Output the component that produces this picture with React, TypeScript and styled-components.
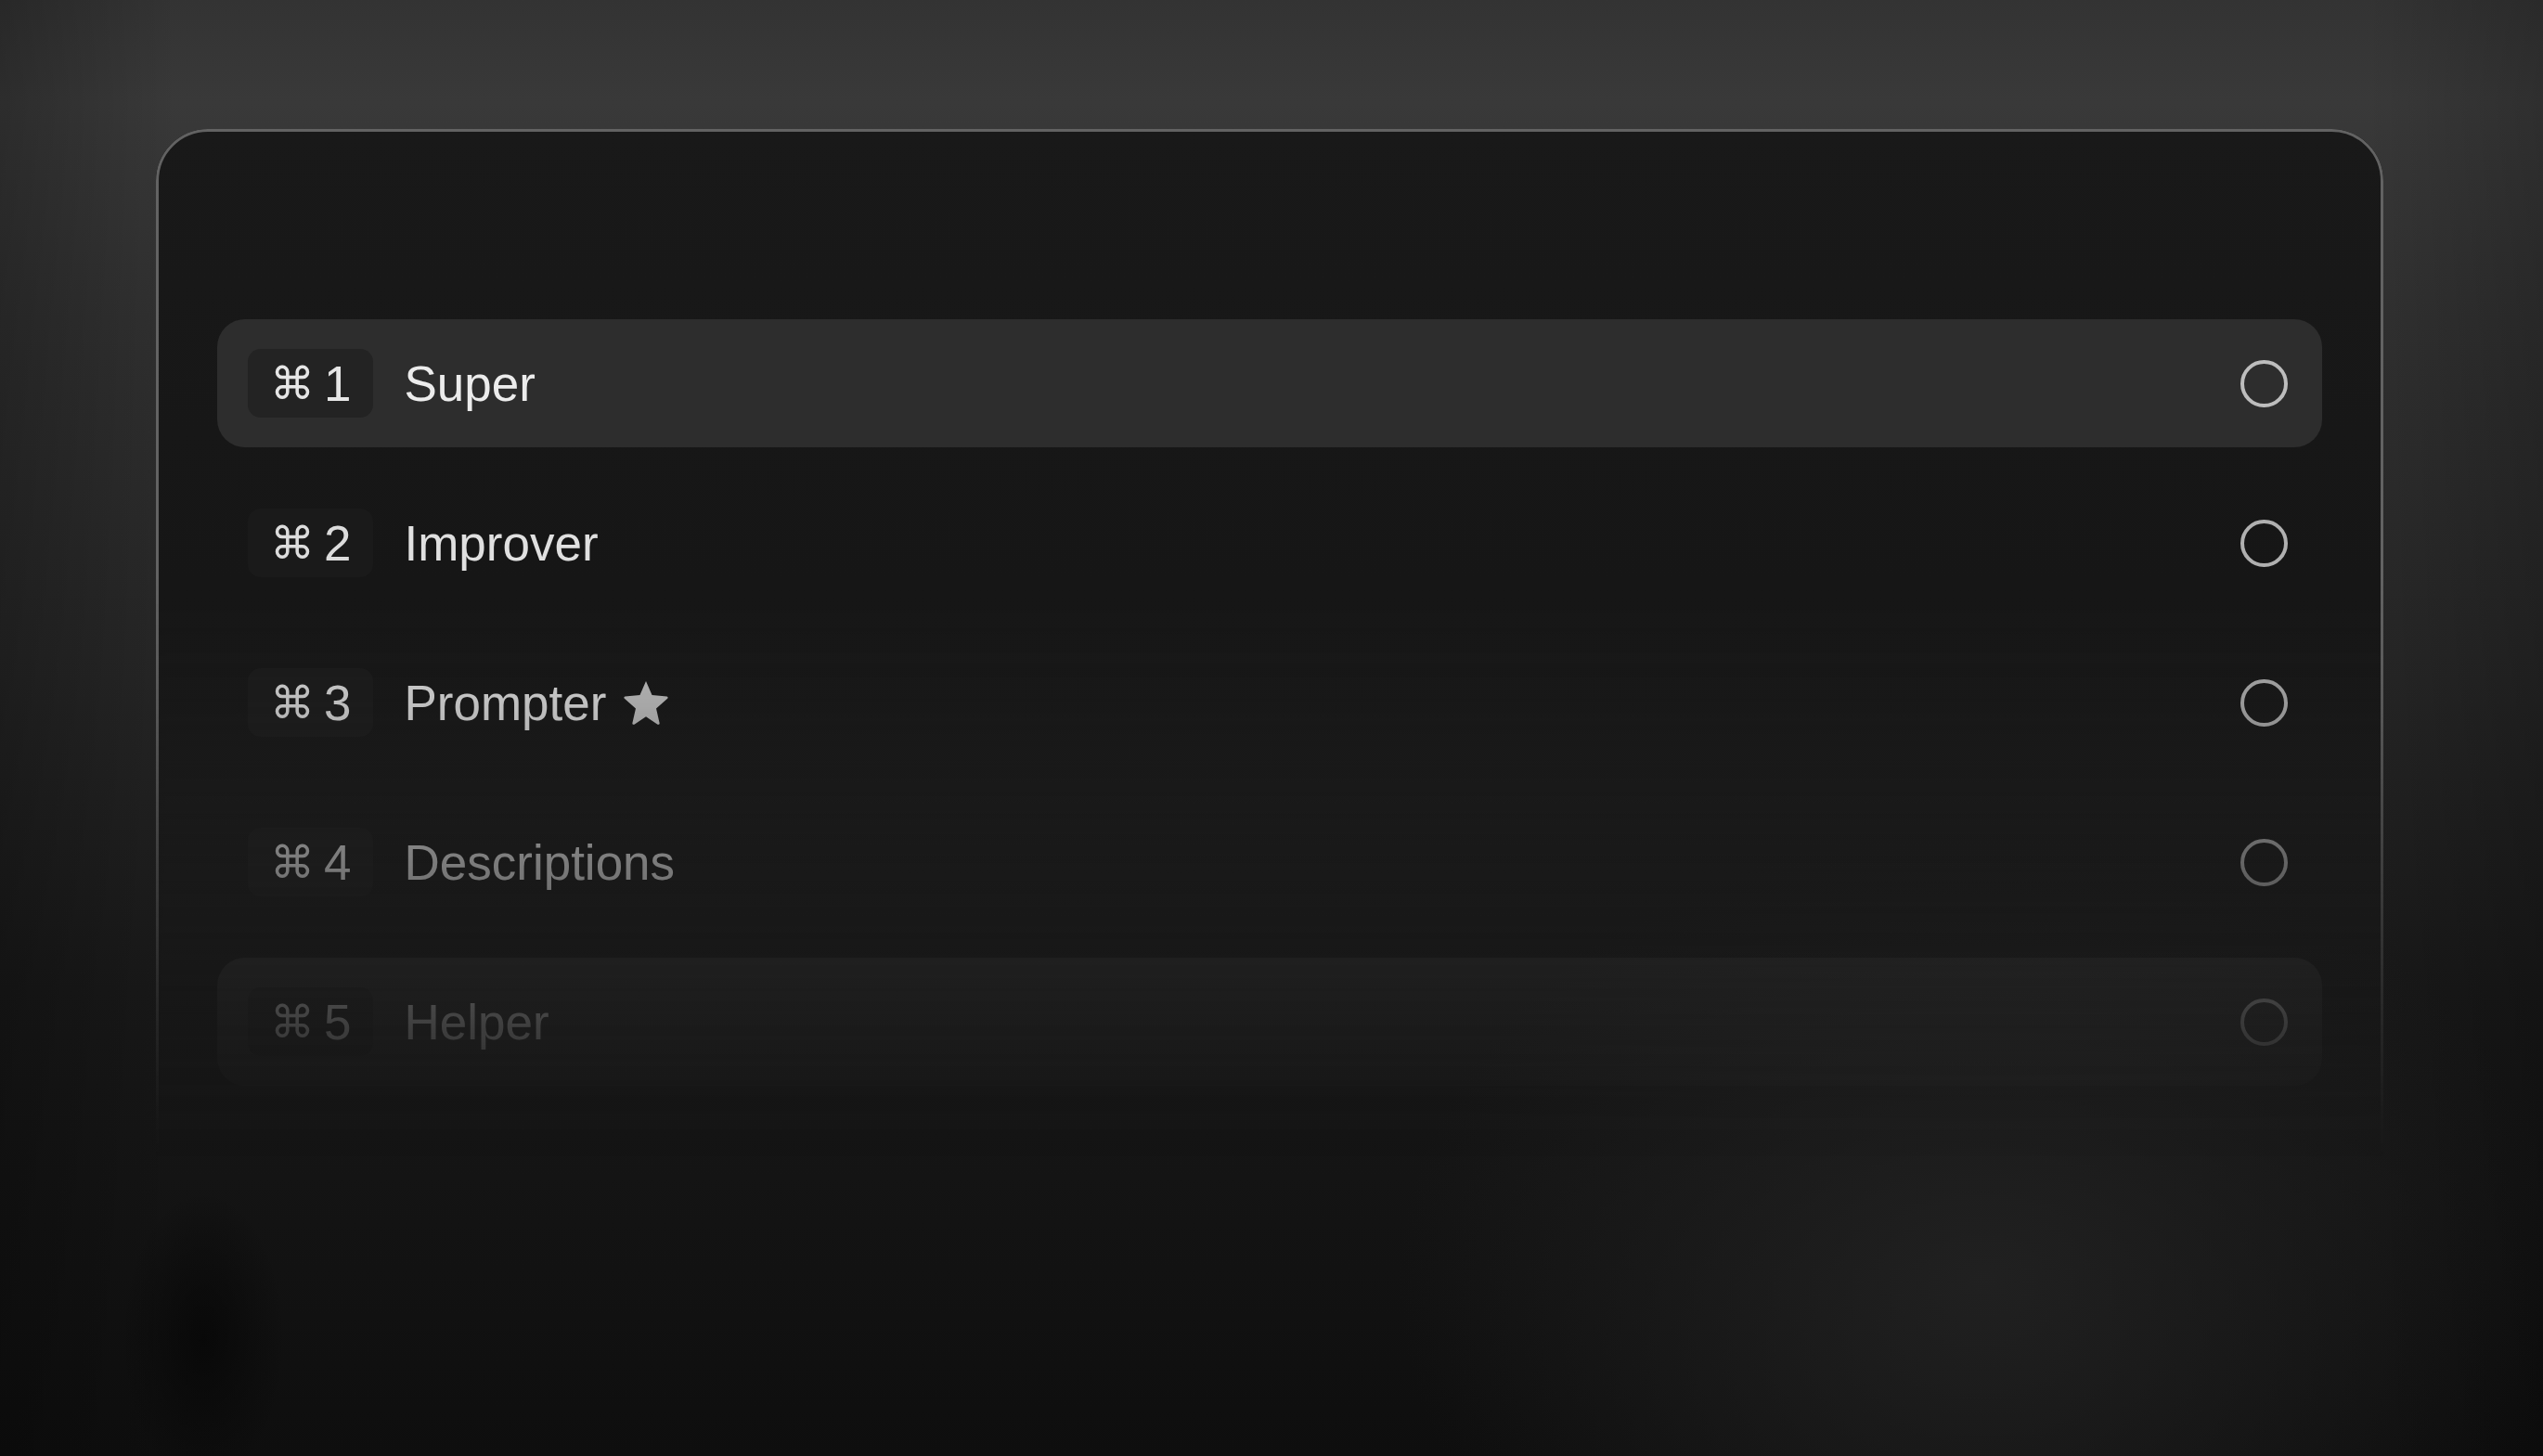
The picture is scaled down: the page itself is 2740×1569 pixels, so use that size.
import React from "react";
import styled, { createGlobalStyle } from "styled-components";

const Global = createGlobalStyle`
  html, body {
    margin: 0;
    padding: 0;
    width: 2740px;
    height: 1569px;
    overflow: hidden;
  }
  body {
    font-family: "Liberation Sans", Arial, sans-serif;
    background:
      radial-gradient(ellipse 900px 700px at 78% 88%, rgba(34,34,34,0.9), rgba(34,34,34,0) 70%),
      radial-gradient(ellipse 110px 200px at 8% 92%, rgba(6,6,6,0.75), rgba(6,6,6,0) 80%),
      linear-gradient(to right, rgba(0,0,0,0.22) 0%, rgba(0,0,0,0) 7%, rgba(0,0,0,0) 93%, rgba(0,0,0,0.18) 100%),
      linear-gradient(to bottom, #333333 0%, #393939 7%, #303030 22%, #262626 45%, #181818 68%, #0e0e0e 100%);
  }
`;

const Page = styled.div`
  width: 2740px;
  height: 1569px;
  box-sizing: border-box;
  padding: 139px 0 0 168px;
  display: flex;
  align-items: flex-start;
`;

const Window = styled.div`
  width: 2400px;
  height: 1220px;
  box-sizing: border-box;
  border: 3px solid #626262;
  border-radius: 56px;
  background: linear-gradient(to bottom, #191919 0%, #161616 40%, #141414 100%);
  box-shadow: 0 0 0 2px #0c0c0c, 0 30px 90px rgba(0, 0, 0, 0.35);
  padding: 202px 63px 0 63px;
  display: flex;
  flex-direction: column;
  gap: 34px;
  -webkit-mask-image: linear-gradient(
    to bottom,
    #000 0px,
    #000 480px,
    rgba(0, 0, 0, 0.84) 616px,
    rgba(0, 0, 0, 0.49) 788px,
    rgba(0, 0, 0, 0.2) 960px,
    rgba(0, 0, 0, 0.03) 1070px,
    rgba(0, 0, 0, 0) 1110px
  );
  mask-image: linear-gradient(
    to bottom,
    #000 0px,
    #000 480px,
    rgba(0, 0, 0, 0.84) 616px,
    rgba(0, 0, 0, 0.49) 788px,
    rgba(0, 0, 0, 0.2) 960px,
    rgba(0, 0, 0, 0.03) 1070px,
    rgba(0, 0, 0, 0) 1110px
  );
`;

const Row = styled.div<{ $active?: boolean }>`
  height: 138px;
  flex: 0 0 auto;
  border-radius: 30px;
  background: ${(p) => (p.$active ? "#2d2d2d" : "transparent")};
  display: flex;
  align-items: center;
  padding: 0 37px 0 33px;
`;

const Badge = styled.div<{ $active?: boolean }>`
  height: 74px;
  border-radius: 14px;
  background: ${(p) => (p.$active ? "#232323" : "#1a1a1a")};
  display: flex;
  align-items: center;
  padding: 0 24px 0 24px;
  color: ${(p) => (p.$active ? "#e6e6e6" : "#dcdcdc")};
  font-size: 53px;
  line-height: 1;
`;

const Cmd = styled.span`
  font-family: "DejaVu Sans", sans-serif;
  font-size: 48px;
  margin-right: 10px;
`;

const Label = styled.span<{ $active?: boolean }>`
  margin-left: 33px;
  font-size: 53px;
  line-height: 1;
  color: ${(p) => (p.$active ? "#ececec" : "#e0e0e0")};
`;

const Star = styled.svg`
  width: 54px;
  height: 54px;
  margin-left: 16px;
  fill: #c2c2c2;
`;

const Spacer = styled.div`
  flex: 1;
`;

const Radio = styled.div<{ $active?: boolean }>`
  width: 51px;
  height: 51px;
  box-sizing: border-box;
  border-radius: 50%;
  border: 4px solid ${(p) => (p.$active ? "#bdbdbd" : "#b0b0b0")};
`;

type Item = { key: string; label: string; active?: boolean; star?: boolean };

const items: Item[] = [
  { key: "1", label: "Super", active: true },
  { key: "2", label: "Improver" },
  { key: "3", label: "Prompter", star: true },
  { key: "4", label: "Descriptions" },
  { key: "5", label: "Helper", active: true },
];

function StarIcon() {
  return (
    <Star viewBox="0 0 24 24">
      <path
        d="M12 1.8l2.9 6.6 7.1.7c.5.1.7.7.3 1l-5.4 4.8 1.6 7c.1.5-.4.9-.9.6L12 18.8l-5.6 3.7c-.5.3-1-.1-.9-.6l1.6-7-5.4-4.8c-.4-.3-.2-.9.3-1l7.1-.7L12 1.8z"
        strokeLinejoin="round"
      />
    </Star>
  );
}

export default function App() {
  return (
    <>
      <Global />
      <Page>
        <Window>
          {items.map((it) => (
            <Row key={it.key} $active={it.active}>
              <Badge $active={it.active}>
                <Cmd>⌘</Cmd>
                <span>{it.key}</span>
              </Badge>
              <Label $active={it.active}>{it.label}</Label>
              {it.star && <StarIcon />}
              <Spacer />
              <Radio $active={it.active} />
            </Row>
          ))}
        </Window>
      </Page>
    </>
  );
}
